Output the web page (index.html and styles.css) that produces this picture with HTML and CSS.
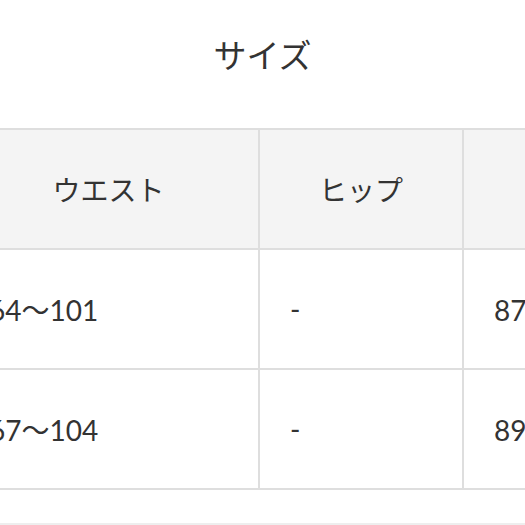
FILE: index.html
```html
<!DOCTYPE html>
<html lang="ja">
<head>
<meta charset="utf-8">
<link rel="stylesheet" href="styles.css">
</head>
<body>
<div class="page">
  <h2 class="title">サイズ</h2>
  <div class="table-wrap">
    <table class="size-table">
      <thead>
        <tr>
          <th class="c1">ウエスト</th>
          <th class="c2">ヒップ</th>
          <th class="c3">股下</th>
        </tr>
      </thead>
      <tbody>
        <tr>
          <td class="c1">64〜101</td>
          <td class="c2">-</td>
          <td class="c3">87〜113</td>
        </tr>
        <tr>
          <td class="c1">67〜104</td>
          <td class="c2">-</td>
          <td class="c3">89〜116</td>
        </tr>
      </tbody>
    </table>
  </div>
  <div class="rule"></div>
</div>
</body>
</html>
```
FILE: styles.css
```css
html, body {
  margin: 0;
  padding: 0;
  background: #ffffff;
  overflow: hidden;
}
.page {
  width: 525px;
  height: 525px;
  overflow: hidden;
  font-family: Lato, "Noto Sans CJK JP", sans-serif;
  color: #333333;
}
.title {
  margin: 0;
  height: 128px;
  box-sizing: border-box;
  padding-top: 32px;
  font-size: 33px;
  line-height: 44px;
  font-weight: 400;
  text-align: center;
  font-family: "Noto Sans CJK JP", sans-serif;
  color: #333333;
}
.table-wrap {
  width: 525px;
  overflow: hidden;
}
.size-table {
  margin-left: -41px;
  border-collapse: separate;
  border-spacing: 0;
  border-top: 2px solid #dedede;
  table-layout: fixed;
  width: 709px;
}
.size-table th,
.size-table td {
  height: 118px;
  padding: 0;
  border-right: 2px solid #dedede;
  border-bottom: 2px solid #dedede;
  font-size: 28px;
  font-weight: 400;
  vertical-align: middle;
  white-space: nowrap;
}
.size-table th {
  background: #f4f4f4;
  text-align: center;
  font-family: "Noto Sans CJK JP", sans-serif;
  font-size: 28px;
}
.size-table td {
  text-align: left;
  padding-left: 30px;
}
.c1 { width: 299px; }
.c2 { width: 202px; }
.c3 { width: 202px; }
.rule {
  margin-top: 33px;
  height: 2px;
  background: #eeeeee;
}
```
